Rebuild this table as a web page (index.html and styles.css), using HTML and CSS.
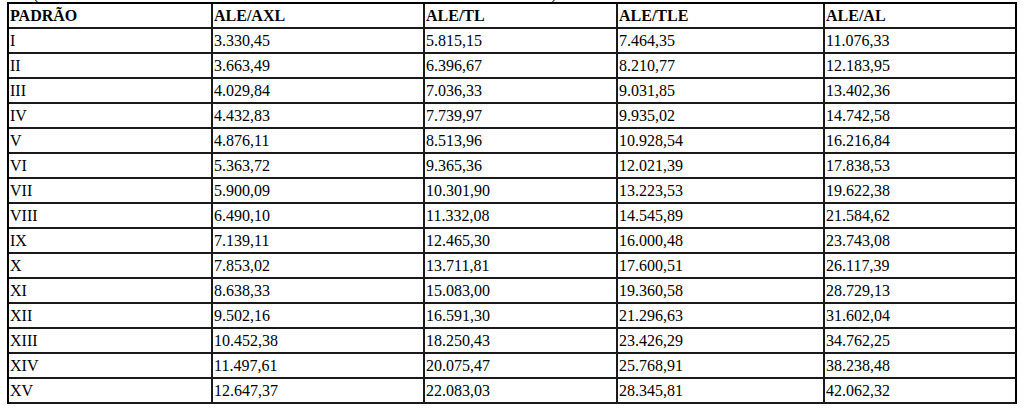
FILE: index.html
```html
<!DOCTYPE html>
<html lang="pt">
<head>
<meta charset="utf-8">
<title>Tabela</title>
<link rel="stylesheet" href="styles.css">
</head>
<body>
<div class="cut"><span class="lp">(</span><span class="rp">)</span></div>
<table class="tab">
  <colgroup>
    <col class="c1"><col class="c2"><col class="c3"><col class="c4"><col class="c5">
  </colgroup>
  <thead>
    <tr><th>PADRÃO</th><th>ALE/AXL</th><th>ALE/TL</th><th>ALE/TLE</th><th>ALE/AL</th></tr>
  </thead>
  <tbody>
    <tr><td>I</td><td>3.330,45</td><td>5.815,15</td><td>7.464,35</td><td>11.076,33</td></tr>
    <tr><td>II</td><td>3.663,49</td><td>6.396,67</td><td>8.210,77</td><td>12.183,95</td></tr>
    <tr><td>III</td><td>4.029,84</td><td>7.036,33</td><td>9.031,85</td><td>13.402,36</td></tr>
    <tr><td>IV</td><td>4.432,83</td><td>7.739,97</td><td>9.935,02</td><td>14.742,58</td></tr>
    <tr><td>V</td><td>4.876,11</td><td>8.513,96</td><td>10.928,54</td><td>16.216,84</td></tr>
    <tr><td>VI</td><td>5.363,72</td><td>9.365,36</td><td>12.021,39</td><td>17.838,53</td></tr>
    <tr><td>VII</td><td>5.900,09</td><td>10.301,90</td><td>13.223,53</td><td>19.622,38</td></tr>
    <tr><td>VIII</td><td>6.490,10</td><td>11.332,08</td><td>14.545,89</td><td>21.584,62</td></tr>
    <tr><td>IX</td><td>7.139,11</td><td>12.465,30</td><td>16.000,48</td><td>23.743,08</td></tr>
    <tr><td>X</td><td>7.853,02</td><td>13.711,81</td><td>17.600,51</td><td>26.117,39</td></tr>
    <tr><td>XI</td><td>8.638,33</td><td>15.083,00</td><td>19.360,58</td><td>28.729,13</td></tr>
    <tr><td>XII</td><td>9.502,16</td><td>16.591,30</td><td>21.296,63</td><td>31.602,04</td></tr>
    <tr><td>XIII</td><td>10.452,38</td><td>18.250,43</td><td>23.426,29</td><td>34.762,25</td></tr>
    <tr><td>XIV</td><td>11.497,61</td><td>20.075,47</td><td>25.768,91</td><td>38.238,48</td></tr>
    <tr><td>XV</td><td>12.647,37</td><td>22.083,03</td><td>28.345,81</td><td>42.062,32</td></tr>
  </tbody>
</table>
</body>
</html>
```
FILE: styles.css
```css
html, body {
  margin: 0;
  padding: 0;
  background: #fff;
}
body {
  font-family: "Liberation Serif", "Times New Roman", serif;
  font-size: 16px;
  color: #000;
}
.cut {
  height: 2px;
  overflow: hidden;
  line-height: 18px;
  white-space: nowrap;
}
.cut span {
  display: inline-block;
  margin-top: -15px;
  vertical-align: top;
}
.lp { margin-left: 33px; }
.rp { margin-left: 513px; }

.tab {
  margin-left: 7px;
  width: 1008px;
  table-layout: fixed;
  border-collapse: separate;
  border-spacing: 0;
  border-top: 2px solid #000;
  border-left: 2px solid #000;
}
.c1 { width: 204px; }
.c2 { width: 212px; }
.c3 { width: 193px; }
.c4 { width: 207px; }
.c5 { width: 192px; }

.tab th, .tab td {
  height: 18px;
  padding: 3px 1px 2px 1px;
  line-height: 18px;
  text-align: left;
  vertical-align: top;
  white-space: nowrap;
  border-right: 2px solid #1a1a1a;
  border-bottom: 2px solid #1a1a1a;
}
.tab th {
  font-weight: bold;
}
.tab th:last-child, .tab td:last-child {
  border-right-color: #000;
}
```
